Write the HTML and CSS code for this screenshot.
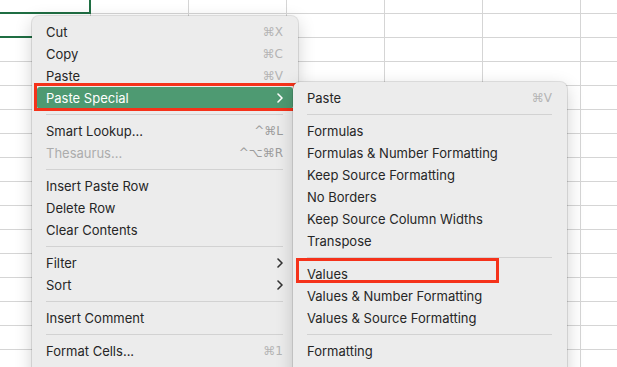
FILE: index.html
```html
<!DOCTYPE html>
<html lang="en">
<head>
  <meta charset="UTF-8">
  <meta name="viewport" content="width=device-width, initial-scale=1.0">
  <title>Paste Special</title>
  <link rel="stylesheet" href="styles.css">
</head>
<body>
  <div class="sheet">
    <div class="sel-cell"></div>
    <div class="sel-line"></div>

    <div class="menu main">
      <div class="item"><span>Cut</span><span class="key">⌘X</span></div>
      <div class="item"><span>Copy</span><span class="key">⌘C</span></div>
      <div class="item"><span>Paste</span><span class="key">⌘V</span></div>
      <div class="item active">
        <span>Paste Special</span>
        <svg class="chev" viewBox="0 0 6 10"><path d="M1 1l4 4-4 4"/></svg>
        <div class="mark mark-special"></div>
      </div>
      <div class="sep"></div>
      <div class="item"><span>Smart Lookup...</span><span class="key dark">^⌘L</span></div>
      <div class="item disabled"><span>Thesaurus...</span><span class="key dark">^⌥⌘R</span></div>
      <div class="sep"></div>
      <div class="item"><span>Insert Paste Row</span></div>
      <div class="item"><span>Delete Row</span></div>
      <div class="item"><span>Clear Contents</span></div>
      <div class="sep"></div>
      <div class="item"><span>Filter</span><svg class="chev" viewBox="0 0 6 10"><path d="M1 1l4 4-4 4"/></svg></div>
      <div class="item"><span>Sort</span><svg class="chev" viewBox="0 0 6 10"><path d="M1 1l4 4-4 4"/></svg></div>
      <div class="sep"></div>
      <div class="item"><span>Insert Comment</span></div>
      <div class="sep"></div>
      <div class="item"><span>Format Cells...</span><span class="key">⌘1</span></div>
    </div>

    <div class="menu sub">
      <div class="item"><span>Paste</span><span class="key">⌘V</span></div>
      <div class="sep"></div>
      <div class="item"><span>Formulas</span></div>
      <div class="item"><span>Formulas &amp; Number Formatting</span></div>
      <div class="item"><span>Keep Source Formatting</span></div>
      <div class="item"><span>No Borders</span></div>
      <div class="item"><span>Keep Source Column Widths</span></div>
      <div class="item"><span>Transpose</span></div>
      <div class="sep"></div>
      <div class="item">
        <span>Values</span>
        <div class="mark mark-values"></div>
      </div>
      <div class="item"><span>Values &amp; Number Formatting</span></div>
      <div class="item"><span>Values &amp; Source Formatting</span></div>
      <div class="sep"></div>
      <div class="item"><span>Formatting</span></div>
    </div>
  </div>
</body>
</html>
```

FILE: styles.css
```css
* {
  padding: 0;
  margin: 0;
  box-sizing: border-box;
}

body {
  width: 617px;
  height: 367px;
  overflow: hidden;
  font-family: Inter, "Liberation Sans", "DejaVu Sans", sans-serif;
  font-size: 13px;
  color: #262626;
}

.sheet {
  position: relative;
  width: 617px;
  height: 367px;
  overflow: hidden;
  background-color: #fff;
  background-image: linear-gradient(#d5d5d5 1px, transparent 1px),
    linear-gradient(90deg, #d5d5d5 1px, transparent 1px);
  background-size: 98px 24px;
  background-position: 90px 13px;
}

/* selected cell outline */
.sel-cell {
  position: absolute;
  left: -4px;
  top: -4px;
  width: 95px;
  height: 18px;
  border-right: 2px solid #1f6e43;
  border-bottom: 2px solid #1f6e43;
}

.sel-line {
  position: absolute;
  left: 0;
  top: 36px;
  width: 40px;
  height: 2px;
  background-color: #1f6e43;
}

.menu {
  position: absolute;
  padding: 5px 0 30px;
  background-color: #ececec;
  border-radius: 7px;
  box-shadow: 0 0 0 1px rgba(0, 0, 0, .1),
    0 5px 18px rgba(0, 0, 0, .18);
}

.main {
  left: 32px;
  top: 16px;
  width: 266px;
}

.sub {
  left: 293px;
  top: 82px;
  width: 274px;
  z-index: 2;
}

.item {
  position: relative;
  display: flex;
  justify-content: space-between;
  align-items: center;
  height: 22px;
  padding: 0 15px 0 14px;
  white-space: nowrap;
}

.item.disabled {
  color: #acacac;
}

.item.active {
  margin: 0 5px;
  padding: 0 10px 0 9px;
  background-color: #4e9a72;
  color: #fff;
  border-radius: 3px;
}

.key {
  color: #b4b4b4;
  font-family: "DejaVu Sans", sans-serif;
  font-size: 12px;
}

.key.dark {
  color: #9c9c9c;
}

.chev {
  width: 6px;
  height: 10px;
  fill: none;
  stroke: #333;
  stroke-width: 1.6;
  stroke-linecap: round;
  stroke-linejoin: round;
}

.active .chev {
  stroke: #fff;
}

.sep {
  height: 11px;
  margin: 0 15px 0 14px;
  background: linear-gradient(transparent 5px, #d2d2d2 5px, #d2d2d2 6px, transparent 6px);
}

/* red callouts */
.mark {
  position: absolute;
  border: 3px solid #f5321a;
}

.mark-special {
  left: -3px;
  right: -3px;
  top: -4px;
  bottom: -2px;
}

.mark-values {
  left: 3px;
  top: -5px;
  width: 203px;
  bottom: 2px;
}
```
